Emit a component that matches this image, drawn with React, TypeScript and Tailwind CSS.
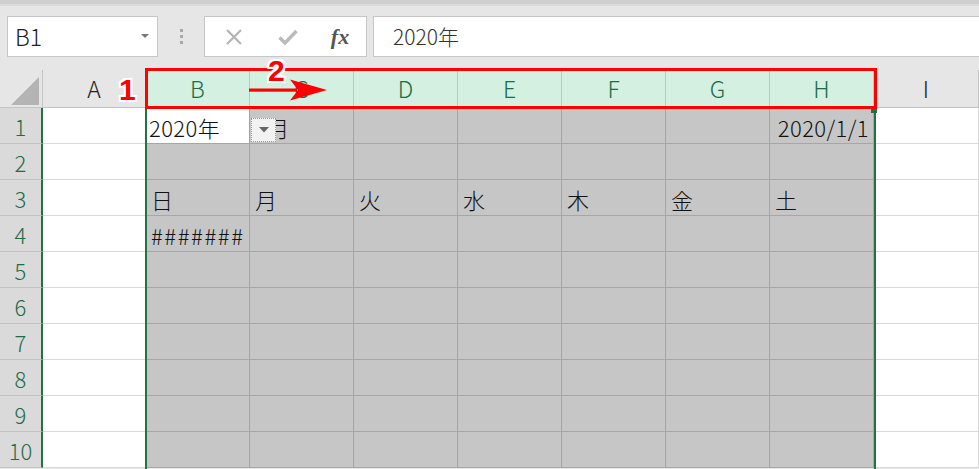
import React from "react";

const COLS = ["A", "B", "C", "D", "E", "F", "G", "H", "I"];
const ROWS = [1, 2, 3, 4, 5, 6, 7, 8, 9, 10];

// cell contents keyed by "col+row"
const DATA: Record<string, { text: string; right?: boolean }> = {
  B1: { text: "2020年" },
  C1: { text: "1月" },
  H1: { text: "2020/1/1", right: true },
  B3: { text: "日" },
  C3: { text: "月" },
  D3: { text: "火" },
  E3: { text: "水" },
  F3: { text: "木" },
  G3: { text: "金" },
  H3: { text: "土" },
  B4: { text: "#######" },
};

const isSel = (c: string) => c >= "B" && c <= "H";

function FormulaBar() {
  return (
    <div className="flex h-[41px] pl-[7px]">
      <div className="flex w-[151px] items-center justify-between border border-[#c6c6c6] bg-white pl-[7px] pr-[8px]">
        <span className="text-[23px] font-light text-[#222]">B1</span>
        <svg width="8" height="5" viewBox="0 0 8 5">
          <path d="M0 0h8L4 4z" fill="#777" />
        </svg>
      </div>
      <div className="flex w-[46px] flex-col items-center justify-center gap-[3px]">
        <span className="h-[3px] w-[3px] bg-[#a8a8a8]" />
        <span className="h-[3px] w-[3px] bg-[#a8a8a8]" />
        <span className="h-[3px] w-[3px] bg-[#a8a8a8]" />
      </div>
      <div className="flex w-[163px] items-center border border-[#c6c6c6] bg-white">
        <div className="flex w-[56px] justify-center pl-[2px]">
          <svg width="18" height="16" viewBox="0 0 18 16">
            <path d="M2 1l14 14M16 1L2 15" stroke="#b5b5b5" strokeWidth="2.2" fill="none" />
          </svg>
        </div>
        <div className="flex w-[54px] justify-center">
          <svg width="20" height="16" viewBox="0 0 20 16">
            <path d="M1.5 8.5l5.5 5.5L18.5 2" stroke="#bababa" strokeWidth="3.4" fill="none" />
          </svg>
        </div>
        <div className="flex w-[50px] justify-center">
          <span className="font-['Liberation_Serif',serif] text-[22px] font-bold italic leading-none text-[#555]">
            fx
          </span>
        </div>
      </div>
      <div className="ml-[6px] flex flex-1 items-center border border-r-0 border-[#c6c6c6] bg-white pl-[19px]">
        <span className="text-[21px] font-light text-[#333]">2020年</span>
      </div>
    </div>
  );
}

function HeaderRow() {
  return (
    <>
      <div className="flex items-end justify-end border-r border-b border-[#c4c4c4] bg-[#e6e6e6] pr-[3px] pb-[2px]">
        <svg width="28" height="28" viewBox="0 0 28 28">
          <path d="M28 0v28H0z" fill="#b4b4b4" />
        </svg>
      </div>
      {COLS.map((c) => (
        <div
          key={c}
          className={
            isSel(c)
              ? "flex items-center justify-center border-r border-b border-[#c4c4c4] bg-[#d3f0e0] text-[23px] font-light text-[#1e6b48]"
              : "flex items-center justify-center border-r border-b border-[#c4c4c4] bg-[#e6e6e6] text-[23px] font-light text-[#222]"
          }
        >
          {c}
        </div>
      ))}
    </>
  );
}

function Row({ r }: { r: number }) {
  return (
    <>
      <div className="flex items-center justify-center border-r-2 border-b border-r-[#217346] border-b-[#c2c2c2] bg-[#dadada] pt-[2px] text-[22px] font-light text-[#1e6b48]">
        {r}
      </div>
      {COLS.map((c) => {
        const key = c + r;
        const d = DATA[key];
        const active = key === "B1";
        let cls =
          "flex items-center overflow-hidden whitespace-nowrap border-r border-b px-[5px] pt-[3px] text-[22px] font-light tracking-[0.4px] text-[#111] ";
        if (active) cls += "bg-white border-[#a6a6a6]";
        else if (isSel(c)) cls += "bg-[#c6c6c6] border-[#a6a6a6]";
        else cls += "bg-white border-[#d9d9d9]";
        if (d?.right) cls += " justify-end pr-[4px]";
        if (key === "B1") cls += " pl-[3px]";
        if (key === "B4") cls += " tracking-[1.6px]";
        return (
          <div key={key} className={cls}>
            {d?.text}
          </div>
        );
      })}
    </>
  );
}

export default function App() {
  return (
    <div className="relative h-[469px] w-[979px] overflow-hidden bg-[#e6e6e6] font-['Noto_Sans_CJK_JP','Noto_Sans',sans-serif]">
      <div className="h-[4px] bg-[#cfcfcf]" />
      <div className="h-[2px] bg-[#dadada]" />
      <div className="pt-[10px]">
        <FormulaBar />
      </div>
      <div className="mt-[13px] grid grid-cols-[43px_103px_104px_104px_104px_104px_104px_104px_104px_1fr] grid-rows-[38px_repeat(10,36px)]">
        <HeaderRow />
        {ROWS.map((r) => (
          <Row key={r} r={r} />
        ))}
      </div>

      {/* selection outline for columns B:H */}
      <div className="absolute top-[108px] left-[145px] h-[361px] w-[731px] border-x-2 border-[#217346]" />
      <div className="absolute top-[108px] left-[871px] h-[5px] w-[6px] bg-[#217346]" />

      {/* list dropdown on B1 */}
      <div className="absolute top-[118px] left-[251px] flex h-[24px] w-[25px] items-center justify-center border border-dotted border-[#9a9a9a] bg-[#f2f2f2]">
        <svg width="10" height="6" viewBox="0 0 10 6">
          <path d="M0 0h10L5 5.5z" fill="#666" />
        </svg>
      </div>

      {/* annotations */}
      <div className="absolute top-[68px] left-[145px] h-[41px] w-[732px] border-[3px] border-[#ff0000]" />
      <span className="absolute top-[75px] left-[119px] font-['Liberation_Sans',sans-serif] text-[30px] font-bold leading-none text-[#ff0000] [text-shadow:-2px_0_#fff,2px_0_#fff,0_-2px_#fff,0_2px_#fff,-2px_-2px_#fff,2px_2px_#fff,-2px_2px_#fff,2px_-2px_#fff]">
        1
      </span>
      <span className="absolute top-[56px] left-[268px] font-['Liberation_Sans',sans-serif] text-[30px] font-bold leading-none text-[#ff0000] [text-shadow:-2px_0_#fff,2px_0_#fff,0_-2px_#fff,0_2px_#fff,-2px_-2px_#fff,2px_2px_#fff,-2px_2px_#fff,2px_-2px_#fff]">
        2
      </span>
      <svg className="absolute top-[78px] left-[248px]" width="82" height="24" viewBox="0 0 82 24">
        <rect x="1" y="10.5" width="48" height="3.2" fill="#ff0000" />
        <path d="M79 12L42 1.5L50 12L42 22.5z" fill="#ff0000" />
      </svg>
    </div>
  );
}
